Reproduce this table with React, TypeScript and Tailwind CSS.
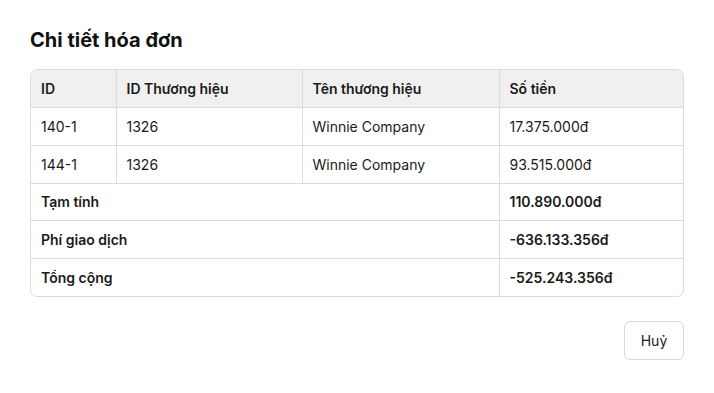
import React from 'react';

const items = [
  { id: '140-1', brandId: '1326', brand: 'Winnie Company', amount: '17.375.000đ' },
  { id: '144-1', brandId: '1326', brand: 'Winnie Company', amount: '93.515.000đ' },
];

const totals = [
  { label: 'Tạm tính', value: '110.890.000đ' },
  { label: 'Phí giao dịch', value: '-636.133.356đ' },
  { label: 'Tổng cộng', value: '-525.243.356đ' },
];

export default function App() {
  return (
    <div className="w-[714px] h-[393px] bg-white px-[30px] pt-[26px] text-[#1a1a1a]" style={{ fontFamily: 'Inter, "Noto Sans", sans-serif' }}>
      <h2 className="text-[20px] leading-[28px] font-bold text-[#111] mb-[15px]">Chi tiết hóa đơn</h2>

      <div className="border border-[#dcdcdc] rounded-[7px] overflow-hidden">
        <table className="w-full table-fixed border-collapse text-[14px]">
          <colgroup>
            <col className="w-[85px]" />
            <col className="w-[186px]" />
            <col className="w-[197px]" />
            <col />
          </colgroup>
          <thead>
            <tr className="bg-[#f0f0f0] h-[37px]">
              <th className="text-left font-semibold px-[10px] border-b border-[#dcdcdc]">ID</th>
              <th className="text-left font-semibold px-[10px] border-b border-l border-[#dcdcdc]">ID Thương hiệu</th>
              <th className="text-left font-semibold px-[10px] border-b border-l border-[#dcdcdc]">Tên thương hiệu</th>
              <th className="text-left font-semibold px-[10px] border-b border-l border-[#dcdcdc]">Số tiền</th>
            </tr>
          </thead>
          <tbody>
            {items.map((row) => (
              <tr key={row.id} className="h-[38px]">
                <td className="px-[10px] border-b border-[#dcdcdc]">{row.id}</td>
                <td className="px-[10px] border-b border-l border-[#dcdcdc]">{row.brandId}</td>
                <td className="px-[10px] border-b border-l border-[#dcdcdc]">{row.brand}</td>
                <td className="px-[10px] border-b border-l border-[#dcdcdc]">{row.amount}</td>
              </tr>
            ))}
            {totals.map((row, i) => (
              <tr key={row.label} className={`font-semibold ${i === 0 ? 'h-[37px]' : 'h-[38px]'}`}>
                <td colSpan={3} className={`px-[10px] border-[#dcdcdc] ${i < totals.length - 1 ? 'border-b' : ''}`}>{row.label}</td>
                <td className={`px-[10px] border-l border-[#dcdcdc] ${i < totals.length - 1 ? 'border-b' : ''}`}>{row.value}</td>
              </tr>
            ))}
          </tbody>
        </table>
      </div>

      <div className="flex justify-end mt-[24px]">
        <button className="w-[60px] h-[39px] border border-[#d9d9d9] rounded-[6px] bg-white text-[14px] text-[#222]">
          Huỷ
        </button>
      </div>
    </div>
  );
}
